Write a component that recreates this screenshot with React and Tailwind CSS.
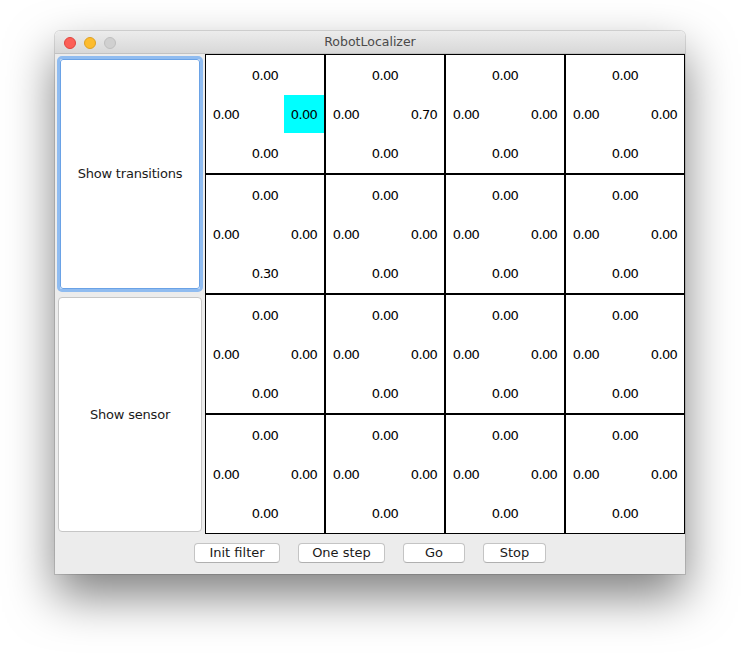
import React from "react";

const font = { fontFamily: '"DejaVu Sans", "Liberation Sans", sans-serif' };

const cells = Array.from({ length: 16 }, (_, i) => ({
  n: "0.00",
  w: "0.00",
  e: i === 1 ? "0.70" : "0.00",
  s: i === 4 ? "0.30" : "0.00",
  hl: i === 0,
}));

function Cell({ c }) {
  return (
    <div className="w-[120px] h-[120px] border border-black bg-white grid grid-cols-[40px_38px_40px] grid-rows-[40px_38px_40px] text-[13px] tracking-[-0.6px] text-black">
      <div className="col-start-1 col-span-3 row-start-1 flex items-center justify-center pt-[1px]">{c.n}</div>
      <div className="col-start-1 row-start-2 flex items-center justify-center pt-[1px]">{c.w}</div>
      <div className={`col-start-3 row-start-2 flex items-center justify-center pt-[1px] ${c.hl ? "bg-[#00ffff]" : ""}`}>{c.e}</div>
      <div className="col-start-1 col-span-3 row-start-3 flex items-center justify-center pt-[1px]">{c.s}</div>
    </div>
  );
}

function Btn({ children, w }) {
  return (
    <button className={`h-[20px] ${w} bg-white border border-[#c4c4c4] border-b-[#b0b0b0] rounded-[4px] text-[13px] text-[#1a1a1a] leading-none flex items-center justify-center`}>
      {children}
    </button>
  );
}

export default function App() {
  return (
    <div className="w-[741px] h-[653px] bg-white pl-[55px] pt-[31px]" style={font}>
      <div className="w-[630px] flex flex-col rounded-t-[5px] overflow-hidden shadow-[0_0_0_1px_rgba(0,0,0,0.12),0_22px_48px_rgba(0,0,0,0.5)]">
        <div className="h-[23px] bg-gradient-to-b from-[#ececec] to-[#d8d8d8] border-b border-[#c2c2c2] relative flex items-center justify-center">
          <div className="absolute left-[9px] top-[6px] flex gap-[8px]">
            <div className="w-[12px] h-[12px] rounded-full bg-[#fc5f57] border border-[#e0443e]" />
            <div className="w-[12px] h-[12px] rounded-full bg-[#fdbc2e] border border-[#dea123]" />
            <div className="w-[12px] h-[12px] rounded-full bg-[#d0d0d0] border border-[#bfbfbf]" />
          </div>
          <span className="text-[12.5px] text-[#4a4a4a] pt-[1px]">RobotLocalizer</span>
        </div>
        <div className="flex bg-[#ececec]">
          <div className="w-[150px] flex flex-col">
            <div className="h-[240px] p-[2px]">
              <div className="h-full rounded-[5px] border-[3px] border-[#90bcf0] bg-white flex items-center justify-center">
                <div className="w-full h-full rounded-[3px] border border-[#6aa2e6] flex items-center justify-center text-[13px] text-[#1a1a1a] tracking-[-0.2px]">
                  Show transitions
                </div>
              </div>
            </div>
            <div className="h-[240px] px-[3px] pt-[3px] pb-[2px]">
              <div className="h-full rounded-[4px] border border-[#c6c6c6] bg-white flex items-center justify-center text-[13px] text-[#1a1a1a] tracking-[-0.2px]">
                Show sensor
              </div>
            </div>
          </div>
          <div className="grid grid-cols-4 w-[480px]">
            {cells.map((c, i) => (
              <Cell key={i} c={c} />
            ))}
          </div>
        </div>
        <div className="h-[40px] bg-[#ececec] flex items-center justify-center gap-[18px] pb-[3px]">
          <Btn w="w-[86px]">Init filter</Btn>
          <Btn w="w-[87px]">One step</Btn>
          <Btn w="w-[62px]">Go</Btn>
          <Btn w="w-[63px]">Stop</Btn>
        </div>
      </div>
    </div>
  );
}
